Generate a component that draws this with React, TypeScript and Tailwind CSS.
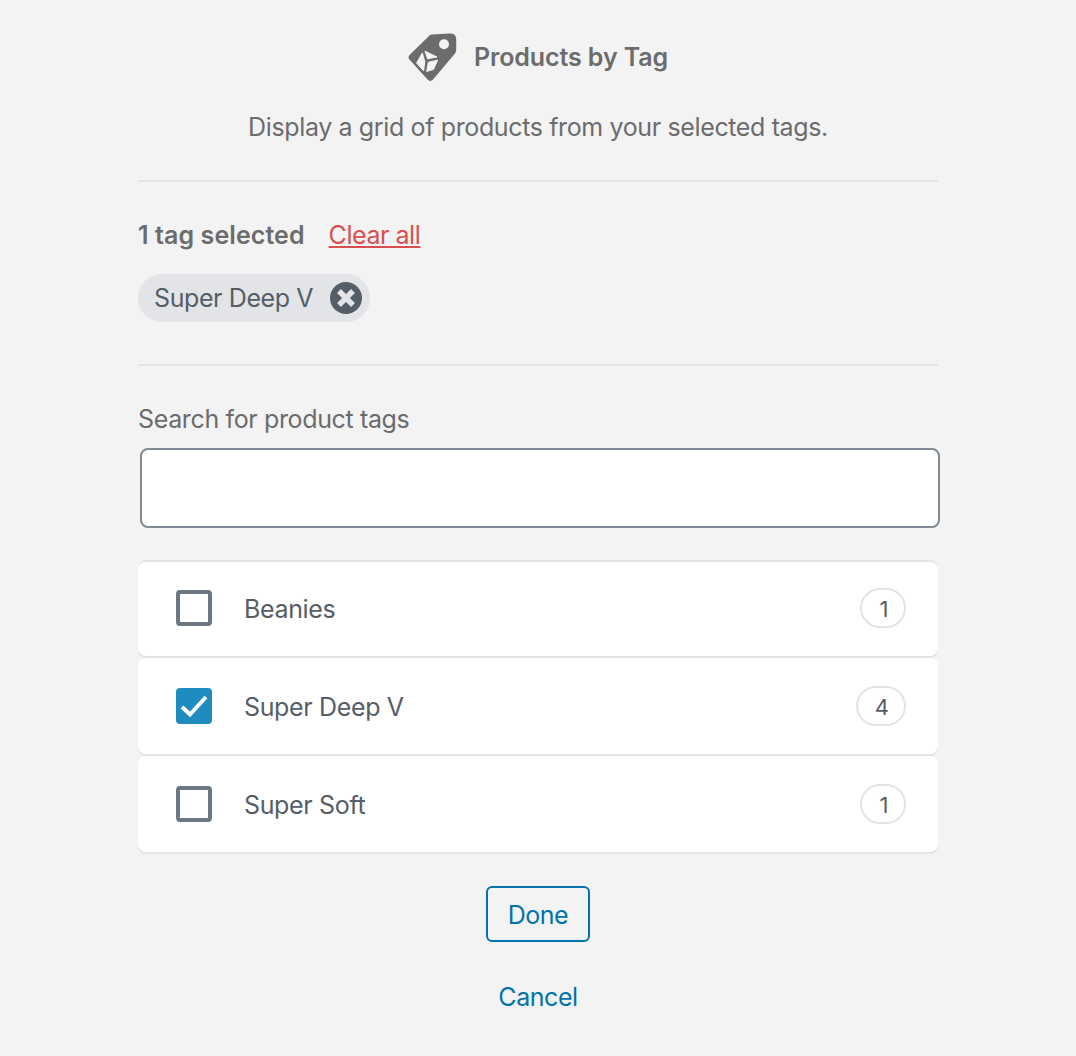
const TAGS = [
    { name: "Beanies", count: 1, checked: false },
    { name: "Super Deep V", count: 4, checked: true },
    { name: "Super Soft", count: 1, checked: false },
];

const TagIcon = () => (
    <svg width="50" height="50" viewBox="1 0 50 50" className="shrink-0">
        <path
            d="M24.7 2.6 L43 1.6 Q49.2 1.4 49.2 7.5 L49.2 18 Q49.2 20 48 21.4 L26 47.6 Q23.5 50.4 20.8 47.8 L2.4 27.6 Q0.4 25 2.8 22.8 L22 4 Q23 2.8 24.7 2.6 Z"
            fill="#6c6c6c"
        />
        <circle cx="37" cy="12.3" r="5" fill="#f3f3f4" />
        <path d="M18 19.2 L30 25 L20.6 26.8 Z" fill="#f3f3f4" stroke="#f3f3f4" strokeWidth="1" strokeLinejoin="round" />
        <path d="M15.3 21 L17.8 29.6 L16.6 38.8 L9.6 31 Z" fill="#f3f3f4" stroke="#f3f3f4" strokeWidth="1" strokeLinejoin="round" />
        <path d="M21.4 30.2 L30.6 28.2 L26.5 37.4 L19.7 39.4 Z" fill="#f3f3f4" stroke="#f3f3f4" strokeWidth="1" strokeLinejoin="round" />
    </svg>
);

export default function App() {
    return (
        <div className="min-h-[1056px] bg-[#f3f3f4] font-['Inter',sans-serif] text-[#6c6c6c] flex flex-col items-center">
            <div className="w-[800px]">
                <header className="pt-[32px] border-b-2 border-[#e2e4e7] h-[182px]">
                    <div className="flex items-center justify-center gap-[16px] h-[50px]">
                        <TagIcon />
                        <h1 className="text-[25px] tracking-[-0.1px] font-semibold leading-[50px]">Products by Tag</h1>
                    </div>
                    <p className="text-[25px] tracking-[-0.37px] leading-[36px] text-center mt-[27px]">
                        Display a grid of products from your selected tags.
                    </p>
                </header>

                <section className="h-[184px] border-b-2 border-[#e2e4e7] pt-[36px]">
                    <div className="flex items-center gap-[24px] h-[34px]">
                        <span className="text-[25px] tracking-[0.08px] font-semibold leading-[34px]">1 tag selected</span>
                        <a className="text-[25px] tracking-[-0.45px] leading-[34px] text-[#d94f4f] underline">Clear all</a>
                    </div>
                    <div className="mt-[22px] inline-flex items-center h-[48px] w-[232px] rounded-full bg-[#e2e4e7] pl-[16px] text-[#555d66]">
                        <span className="pt-[2px] text-[25px] tracking-[-0.4px]">Super Deep V</span>
                        <span className="ml-[17px] w-[32px] h-[32px] rounded-full bg-[#555d66] flex items-center justify-center">
                            <svg width="18" height="18" viewBox="0 0 18 18">
                                <path d="M2 2 L16 16 M16 2 L2 16" stroke="#e2e4e7" strokeWidth="5.5" />
                            </svg>
                        </span>
                    </div>
                </section>

                <label className="block text-[25px] tracking-[-0.36px] leading-[36px] mt-[35px]">Search for product tags</label>
                <input
                    type="text"
                    className="block ml-[2px] mt-[11px] w-[800px] h-[80px] bg-white border-2 border-[#7e8993] rounded-[8px]"
                />

                <ul className="mt-[32px] border-t-2 border-[#e2e4e7] rounded-t-[8px]">
                    {TAGS.map((tag) => (
                        <li
                            key={tag.name}
                            className="h-[96px] first:h-[94px] first:pb-[2px] mb-[2px] bg-white rounded-[8px] shadow-[0_2px_0_#e2e4e7] flex items-center pl-[38px] pr-[32px] text-[#555d66]"
                        >
                            {tag.checked ? (
                                <span className="w-[36px] h-[36px] rounded-[4px] bg-[#1e8cbe] flex items-center justify-center">
                                    <svg width="36" height="36" viewBox="0 0 36 36">
                                        <path d="M6 19 L14 26.5 L30 9" fill="none" stroke="#fff" strokeWidth="4" />
                                    </svg>
                                </span>
                            ) : (
                                <span className="w-[36px] h-[36px] rounded-[4px] border-4 border-[#6c7781] bg-white" />
                            )}
                            <span className="ml-[32px] pt-[4px] text-[25px] tracking-[-0.35px] flex-1">{tag.name}</span>
                            <span className="h-[40px] min-w-[46px] pt-[2px] pl-[17px] pr-[15px] rounded-full border-2 border-[#e2e4e7] flex items-center justify-center text-[22px]">
                                {tag.count}
                            </span>
                        </li>
                    ))}
                </ul>

                <div className="flex flex-col items-center">
                    <button className="mt-[32px] w-[104px] h-[56px] pt-[3px] rounded-[6px] border-2 border-[#0073aa] text-[#0073aa] text-[25px] tracking-[-0.5px]">
                        Done
                    </button>
                    <a className="mt-[37px] text-[25px] tracking-[-0.45px] leading-[36px] text-[#0073aa]">Cancel</a>
                </div>
            </div>
        </div>
    );
}
